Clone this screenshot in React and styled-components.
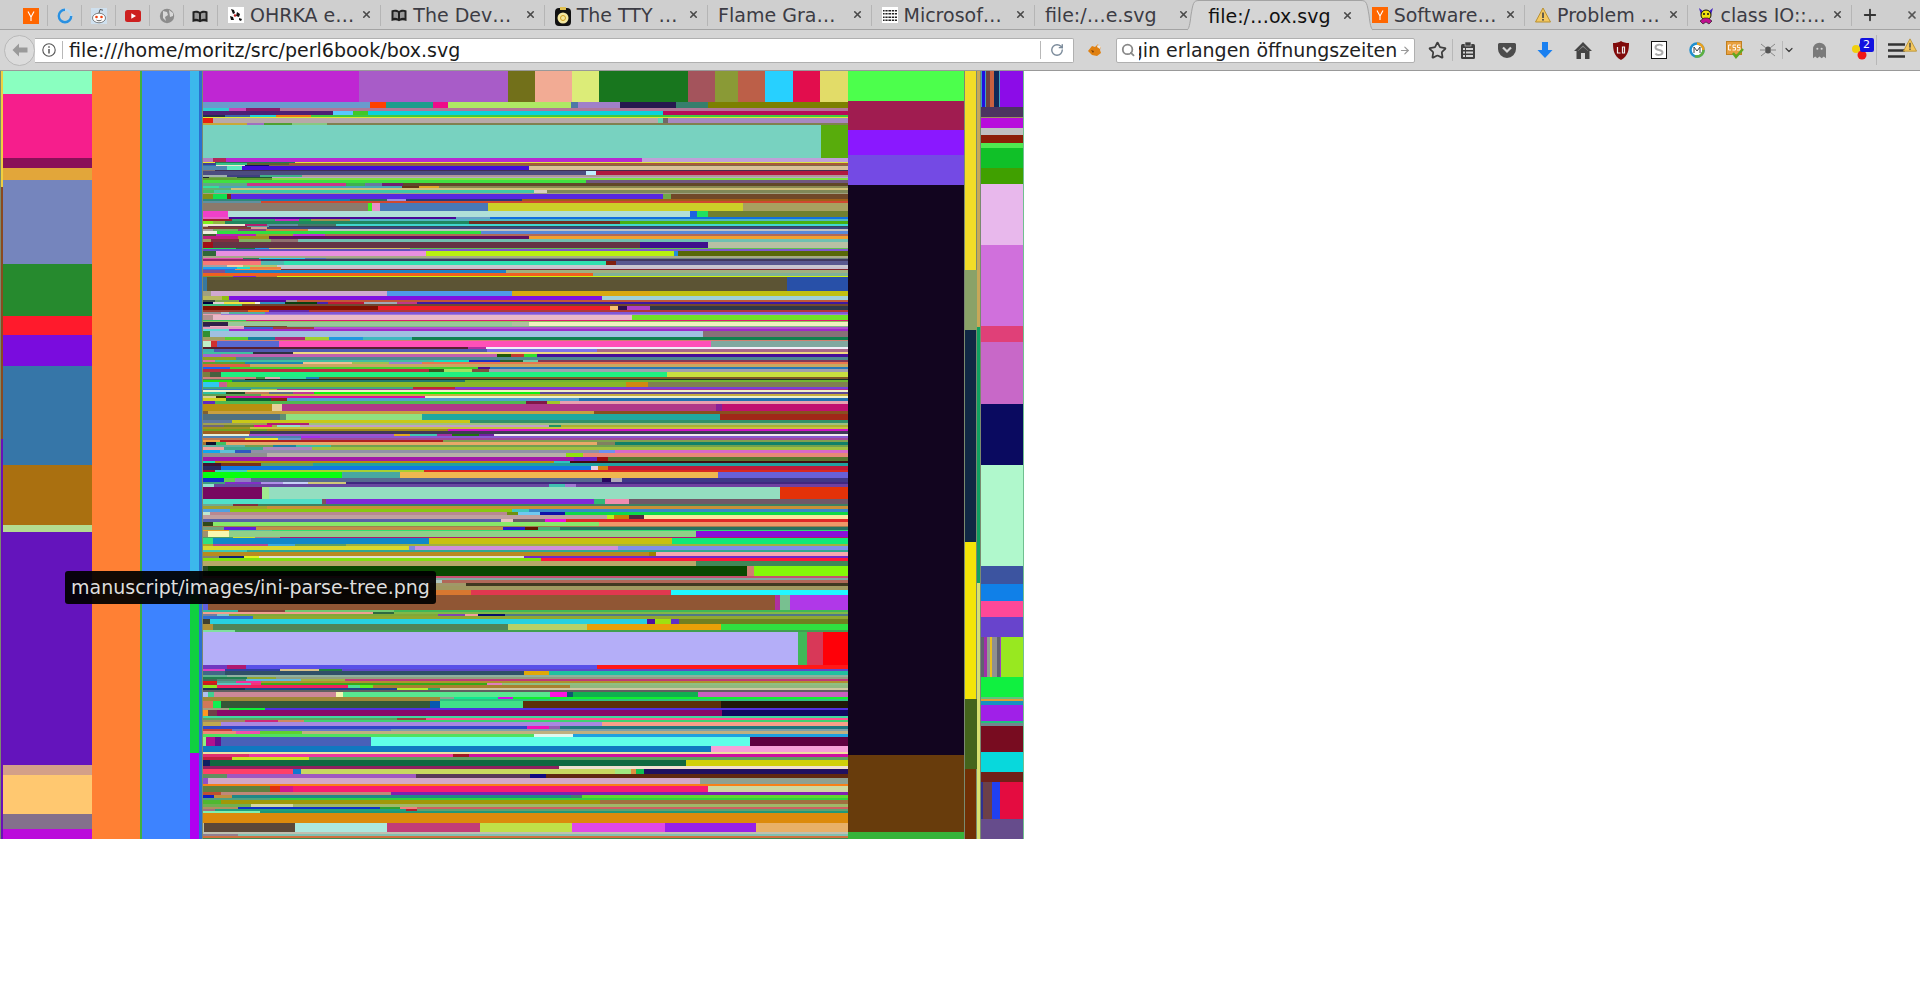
import React from 'react'
import styled, { createGlobalStyle } from 'styled-components'
import { X, Plus, RotateCw, Search, ArrowRight, ChevronDown, Star } from 'lucide-react'

const GlobalStyle = createGlobalStyle`
  html, body {
    margin: 0;
    padding: 0;
    background: #fff;
    font-family: 'DejaVu Sans', sans-serif;
  }
`

const Page = styled.div`
  position: relative;
  width: 1920px;
  height: 1006px;
  overflow: hidden;
  background: #fff;
`

const TabBar = styled.div`
  display: flex;
  align-items: stretch;
  height: 29px;
  padding-left: 14.6px;
  background: #cfcfcf;
  border-bottom: 1px solid #a3a3a3;
`

const PinnedTab = styled.div`
  display: flex;
  align-items: center;
  justify-content: center;
  box-sizing: border-box;
  width: 33.9px;
  margin: 5px 0 3px;
  border-right: 1px solid #b5b5b5;
`

const Tab = styled.div`
  position: relative;
  flex: none;
  display: flex;
  align-items: center;
  box-sizing: border-box;
  width: 163.4px;
  padding: 0 9px 0 10px;
  font-size: 19px;
  color: ${({ $active }) => ($active ? '#111' : '#3c3c44')};
  white-space: nowrap;
  z-index: ${({ $active }) => ($active ? 1 : 0)};
  height: ${({ $active }) => ($active ? '30px' : 'auto')};
  background: ${({ $active }) => ($active ? '#d5d5d5' : 'transparent')};
  border-top: ${({ $active }) => ($active ? '1px solid #a3a3a3' : 'none')};
  &::after {
    content: '';
    display: ${({ $noSep }) => ($noSep ? 'none' : 'block')};
    position: absolute;
    right: 0;
    top: 5px;
    bottom: 3px;
    width: 1px;
    background: #b5b5b5;
  }
`

const TabFlank = styled.svg`
  position: absolute;
  top: -1px;
  ${({ $side }) => ($side === 'left' ? 'left: -11px;' : 'right: -11px;')}
  ${({ $side }) => ($side === 'right' ? 'transform: scaleX(-1);' : '')}
`

const Favicon = styled.span`
  flex: none;
  display: inline-flex;
  width: 16px;
  height: 16px;
  margin-right: 6px;
`

const Close = styled.span`
  display: inline-flex;
  margin-left: auto;
  color: #4a4a4a;
`

const NewTab = styled.div`
  display: flex;
  align-items: center;
  justify-content: center;
  width: 36px;
  color: #333;
`

const WindowClose = styled.div`
  display: flex;
  align-items: center;
  margin-left: auto;
  padding-right: 2px;
  color: #555;
`

const Toolbar = styled.div`
  display: flex;
  align-items: center;
  height: 40px;
  padding-left: 4px;
  background: #d5d5d5;
  border-bottom: 1px solid #999;
`

const BackButton = styled.div`
  position: relative;
  z-index: 1;
  flex: none;
  display: flex;
  align-items: center;
  justify-content: center;
  box-sizing: border-box;
  width: 31px;
  height: 31px;
  border: 1px solid #b9b9b9;
  border-radius: 50%;
  background: #dcdcdc;
`

const UrlBar = styled.div`
  flex: none;
  display: flex;
  align-items: center;
  box-sizing: border-box;
  width: 1038.5px;
  height: 25px;
  padding-left: 7px;
  background: #fff;
  border: 1px solid #b0b0b0;
  border-left: none;
  border-radius: 0 2px 2px 0;
  font-size: 19px;
  color: #1a1a1a;
`

const UrlDivider = styled.span`
  flex: none;
  width: 1px;
  height: 18px;
  margin: ${({ $margin }) => $margin};
  background: #b8b8b8;
`

const FoxSlot = styled.div`
  flex: none;
  display: flex;
  align-items: center;
  justify-content: center;
  width: 42.5px;
`

const SearchBar = styled.div`
  flex: none;
  display: flex;
  align-items: center;
  box-sizing: border-box;
  width: 299px;
  height: 25px;
  padding: 0 3px 0 4px;
  background: #fff;
  border: 1px solid #b0b0b0;
  border-radius: 2px;
  font-size: 19px;
  color: #222;
`

const SearchText = styled.span`
  display: block;
  flex: none;
  width: 258px;
  margin: 0 2px 0 4px;
  overflow: hidden;
  direction: rtl;
  white-space: nowrap;
`

const ToolSlot = styled.div`
  flex: none;
  display: flex;
  align-items: center;
  justify-content: center;
  position: relative;
  box-sizing: border-box;
  width: ${({ $w }) => $w}px;
  padding: ${({ $pad }) => $pad || 0};
  color: #3d3d3d;
`

const ToolDivider = styled.span`
  flex: none;
  width: 1px;
  height: ${({ $h }) => $h || 22}px;
  background: #b8b8b8;
`

const Badge = styled.span`
  position: absolute;
  top: -2px;
  right: 2px;
  width: 14px;
  height: 14px;
  background: #1212e0;
  border-radius: 2px;
  color: #fff;
  font-size: 11px;
  line-height: 14px;
  text-align: center;
`

const MenuWarning = styled.span`
  position: absolute;
  top: -6px;
  right: 0;
`

const Treemap = styled.svg`
  display: block;
  shape-rendering: crispEdges;
`

const Tooltip = styled.div`
  position: absolute;
  left: 65px;
  top: 571px;
  box-sizing: border-box;
  height: 33px;
  padding: 0 6px;
  line-height: 32px;
  font-size: 19px;
  color: #dedede;
  white-space: nowrap;
  background: rgba(0, 0, 0, 0.93);
  border-radius: 3px;
`

// big blocks, x y w h colour, in page pixels minus the toolbar
const blocks = [
  [1, 0, 2, 116, '#f0d040'], [1, 116, 2, 252, '#8a4a20'], [1, 368, 2, 400, '#6a10b8'],
  [3, 0, 89, 23, '#8affc0'], [3, 23, 89, 64, '#f61e8c'], [3, 87, 89, 10, '#8a1058'],
  [3, 97, 89, 12, '#e2a63a'], [3, 109, 89, 84, '#7585bd'], [3, 193, 89, 52, '#268a2e'],
  [3, 245, 89, 19, '#ff1a2c'], [3, 264, 89, 31, '#7a0cde'], [3, 295, 89, 99, '#3676a8'],
  [3, 394, 89, 60, '#aa7010'], [3, 454, 89, 7, '#b4dc90'], [3, 461, 89, 233, '#6414bc'],
  [3, 694, 89, 10, '#d4a088'], [3, 704, 89, 39, '#ffc870'], [3, 743, 89, 15, '#84708c'],
  [3, 758, 89, 10, '#bb0bdb'],
  [92, 0, 48, 768, '#ff8034'], [140, 0, 2, 768, '#40b040'], [142, 0, 48, 768, '#3d83ff'],
  [190, 0, 9, 524, '#3cb8ec'], [190, 524, 9, 158, '#10d040'], [190, 682, 9, 86, '#b000f0'],
  [199, 0, 3, 768, '#2a70d0'],
  [848, 0, 116, 30, '#4cff4c'], [848, 30, 116, 29, '#a01c50'], [848, 59, 116, 25, '#8a18ff'],
  [848, 84, 116, 30, '#744ae4'], [848, 114, 116, 570, '#12051f'], [848, 684, 116, 77, '#683c0c'],
  [848, 761, 116, 7, '#36b43a'],
  [965, 0, 11, 199, '#f2dc28'], [965, 199, 12, 60, '#8aa268'], [965, 259, 11, 212, '#102844'],
  [965, 471, 11, 157, '#f4e408'], [965, 628, 12, 70, '#44641c'], [965, 698, 11, 70, '#703005'],
  [977, 0, 3, 256, '#c8a858'], [977, 256, 3, 256, '#10a060'], [977, 512, 3, 256, '#d8e070'],
  [981, 0, 42, 36, '#40a0c0'], [982, 0, 3, 36, '#2010e0'], [986, 0, 4, 36, '#704040'],
  [990, 0, 4, 36, '#c86040'], [994, 0, 5, 36, '#102858'], [1000, 0, 23, 36, '#8c0ce8'],
  [981, 36, 42, 10, '#4c3460'], [981, 46, 42, 1, '#a09060'], [981, 47, 42, 10, '#b80cdc'],
  [981, 57, 42, 7, '#c0c0c0'], [981, 64, 42, 8, '#8c1e08'], [981, 72, 42, 5, '#50e850'],
  [981, 77, 42, 20, '#10c028'], [981, 97, 42, 16, '#40a000'], [981, 113, 42, 61, '#e8b8ec'],
  [981, 174, 42, 81, '#d070dc'], [981, 255, 42, 16, '#e04078'], [981, 271, 42, 62, '#c868c8'],
  [981, 333, 42, 61, '#0a0a60'], [981, 394, 42, 101, '#b0f8cc'], [981, 495, 42, 18, '#3c54a0'],
  [981, 513, 42, 17, '#1080e8'], [981, 530, 42, 16, '#ff4898'], [981, 546, 42, 20, '#6844cc'],
  [981, 566, 3, 40, '#606070'], [984, 566, 3, 40, '#a030a8'], [987, 566, 3, 40, '#90a090'],
  [990, 566, 2, 40, '#e8c020'], [992, 566, 5, 40, '#909090'], [997, 566, 3, 40, '#606070'],
  [1000, 566, 1, 40, '#a040c0'], [1001, 566, 22, 40, '#98e820'],
  [981, 606, 42, 20, '#10f040'], [981, 626, 42, 2, '#60c080'], [981, 628, 42, 2, '#e0a030'],
  [981, 630, 42, 4, '#1890c0'], [981, 634, 42, 16, '#a020e8'], [981, 650, 42, 2, '#20c080'],
  [981, 652, 42, 3, '#708890'], [981, 655, 42, 26, '#780c20'], [981, 681, 42, 20, '#08d8dc'],
  [981, 701, 42, 10, '#702018'], [981, 711, 2, 37, '#303090'], [983, 711, 9, 37, '#6c4048'],
  [992, 711, 8, 37, '#2040f0'], [1000, 711, 23, 37, '#e40c40'], [981, 748, 42, 20, '#664c8c'],
  [1023, 0, 1, 768, '#70c090'],
]

// strips of the middle column, as measured on three crops: top, bottom, then end/colour pairs
const stripsA = [
  [3, 95, '377 bf26d3 731 a85cc8 796 72701a 883 f2ab94 948 dcec78 1159 18761e 1224 a4545c 1277 8a9a36 1343 bc5f48 1409 27d0ff 1473 e20d4d 1540 e2dc68'],
  [96, 113, '404 6a9bcc 443 ff4000 553 1e9c8c 588 ee0a8a 881 aee864 897 4f78a6 998 a080c8 1132 26184e 1206 367e6c 1540 7c8000'],
  [114, 122, '68 30d0d0 110 c848b8 190 8a1a6a 1540 b07898'],
  [123, 135, '316 4e1f74 363 58c8ff 398 40c828 1101 0ad2dc 1540 b80a58'],
  [136, 139, '60 203050 118 3868a8 180 20d0d8 263 f07820 1540 40c840'],
  [140, 144, '1540 d8ec30'],
  [145, 158, '31 e82010 1087 b8a8a8 1100 60d8b0 1111 706868 1540 a888c0'],
  [159, 164, '112 c8a838 153 a070c0 219 50a030 302 88c880 1540 808050'],
  [165, 262, '1476 78d2c0 1540 58ac0c'],
  [263, 275, '32 b080c0 61 b02858 1051 b828d0 1540 c0a0d8'],
  [276, 279, '36 e8e830 226 208050 1540 d8e840'],
  [280, 284, '38 404090 112 38c088 212 606030 1540 a85838'],
  [285, 287, '38 3070b0 106 f0e8d0 165 101060 1540 806848'],
  [288, 298, '64 5088b0 100 60e8c0 782 4010d8 1540 d8c098'],
  [299, 303, '36 807070 1540 403050'],
  [304, 315, '918 4c4c80 940 c0f0ff 1540 b01840'],
  [316, 319, '64 a0b0b0 142 404080 242 40b088 1540 b09898'],
  [320, 323, '22 202030 88 70a050 172 205838 1540 b8a8c8'],
  [324, 328, '172 60a030 1540 80e040'],
  [329, 338, '917 40e040 1540 705880'],
  [339, 346, '112 60a888 348 c83888 392 40b050 432 6878a0 482 702070 1540 604828'],
  [347, 354, '46 30e0a0 480 48a8b8 520 603818 567 e0a828 1540 888850'],
  [355, 359, '74 60b070 1540 d0c078'],
  [360, 367, '34 40c060 794 40c8a8 824 d8d0c0 1540 808858'],
  [368, 371, '1540 a0a080'],
  [372, 385, '32 809018 64 10e050 74 802020 1101 5828e0 1120 70a848 1540 704828'],
  [386, 393, '144 308878 356 1878b0 444 306860 490 9890e0 765 283878 1540 a06018'],
  [394, 398, '144 6090a0 1540 d04830'],
  [399, 422, '400 8a7a6c 408 40f020 428 e890c8 684 4878b8 1291 ccd028 1540 a8a060'],
  [423, 441, '66 f040c8 1164 b0e0d8 1181 2060e0 1207 20e060 1540 708030'],
  [442, 447, '70 e860c8 608 480898 690 68a0c8 1540 1070e0'],
  [448, 452, '76 a02028 178 30a070 236 c030c0 264 20a850 356 a09050 1540 50b8c0'],
  [453, 461, '30 80f020 60 90b840 640 208860 997 703020 1540 48b010'],
  [462, 466, '108 f0e8d0 160 b02070 232 6090a0 322 487868 1540 40d8d0'],
  [467, 471, '20 c0b0a0 112 703050 164 60a0a0 1540 384858'],
  [472, 476, '122 804030 160 d0a090 1540 384880'],
  [477, 482, '30 b0a0a0 90 70b060 156 904080 256 d08040 1540 c0c0c0'],
  [483, 490, '40 f0f0e0 667 30e040 1540 5888d8'],
  [491, 497, '38 406030 134 b820b8 220 a0a030 296 c030d0 1540 b06858'],
  [498, 507, '90 c02080 165 a09020 782 601060 1540 f0a030'],
  [508, 514, '26 a0a060 92 803040 168 80b060 232 907070 1540 70c0b0'],
  [515, 532, '31 a01018 1046 643444 1206 40108c 1540 b8c0a4'],
  [533, 536, '86 20e060 130 108040 164 20a0e0 500 d0c060 1540 60c050'],
  [537, 543, '500 6050c0 1540 8058d0'],
  [544, 558, '38 306838 536 e890e0 1126 b8f010 1136 2090d8 1540 586808'],
  [559, 563, '1540 a8a888'],
  [564, 567, '102 e050b0 140 208060 250 20d0f0 300 4878c0 1540 708880'],
  [568, 572, '144 902868 1540 403860'],
  [573, 584, '144 f87878 200 50b8b0 965 30e0b0 988 802010 1540 585890'],
  [585, 590, '64 a8a0a0 102 f0d0a0 184 b0c870 1540 c8c8d0'],
  [591, 595, '88 20a0f0 118 20e0d0 192 f08040 1540 c8c0d0'],
  [596, 600, '84 4068d0 192 f09048 1540 802830'],
  [601, 607, '60 805090 726 2080c8 1540 a0b080'],
  [608, 617, '933 f06020 1540 80b098'],
  [618, 621, '78 889030 132 8020d0 184 c07030 1540 d0f010'],
  [622, 663, '17 3878a0 1395 5c5434 1540 2850a8'],
  [664, 677, '26 a0a080 444 d0a8d0 741 5098e8 1068 d8a810 1540 c0c010'],
  [678, 688, '52 b8b860 68 90c010 955 8010e0 1540 a0d0d8'],
  [689, 695, '36 405040 92 80a050 204 580898 230 a09090 1540 c05838'],
  [696, 702, '30 000040 56 e0d0d0 130 f0e040 142 f0f0e0 202 3090c0 278 084010 303 4820b0 390 c01838 468 a0a8b8 516 c03888 1540 4018a0'],
  [703, 706, '100 40c080 1540 704830'],
  [707, 720, '422 801000 974 f01c28 994 f8c070 1015 301050 1068 b040c8 1540 303848'],
]

const stripsB = [
  [30, 35, '114 a04030 164 f07010 260 6828a8 1540 b03838'],
  [36, 41, '50 909090 70 a8c0c8 154 50b0a0 1540 8058d8'],
  [42, 45, '50 e8a0b0 1540 a078d8'],
  [46, 58, '30 b09090 1026 e8b8c8 1540 70e028'],
  [59, 62, '110 30c060 166 d01878 1540 e01870'],
  [63, 66, '1540 90c060'],
  [67, 76, '66 302048 741 98c898 782 b0c0a0 1540 f0f0c0'],
  [77, 80, '24 504880 105 f0b0c0 207 705030 1540 80b888'],
  [81, 86, '105 e0a0c0 174 3860d0 272 a04040 1540 b050d0'],
  [87, 92, '70 60d8d8 1540 a028c8'],
  [93, 110, '24 309030 1195 a0c0e0 1540 887078'],
  [111, 118, '60 a0a060 114 58d030 178 1880a0 250 b02878 306 a0d030 388 2098e0 503 40b8c0 1540 108050'],
  [119, 122, '1540 d08070'],
  [123, 140, '27 c0f0c8 40 d03030 188 5868d0 1215 ff50b8 1540 80a8a0'],
  [141, 147, '637 582030 680 b030a0 1540 f0f0f8'],
  [148, 156, '34 40b0b0 681 5058b0 943 8070e8 1540 a86888'],
  [157, 161, '126 40c0a0 220 303040 1540 f0d880'],
  [162, 170, '50 a068d0 706 c060b0 738 205808 770 c03830 800 30e030 1540 481098'],
  [171, 178, '86 90a020 1540 508890'],
  [179, 186, '36 e070a0 556 40c0a0 640 10e0c0 712 2030c0 768 286030 804 70c8a8 1540 803858'],
  [187, 192, '108 60a030 245 2088b0 362 f0c090 448 a0c050 528 a080c8 1540 e87850'],
  [193, 200, '118 e06040 1540 c8a860'],
  [201, 207, '72 2060f0 660 40d030 688 481090 1540 2878b8'],
  [208, 215, '544 b83040 580 385820 646 a0e060 686 805040 1540 a0a0b0'],
  [216, 231, '24 788040 50 486040 1109 20f080 1540 c8e040'],
  [232, 235, '134 d08080 154 409040 190 e0a8b0 252 30d8a0 282 2080c0 1540 805828'],
  [236, 240, '108 508060 122 302010 1540 183828'],
  [241, 246, '76 20e010 630 207870 1540 70b830'],
  [247, 260, '44 30c8f0 64 c86090 1011 88b828 1064 d08810 1540 808050'],
  [261, 265, '506 40a880 606 c02830 1540 7840d8'],
  [266, 270, '122 3878c0 184 b0c040 1540 b03090'],
  [271, 274, '1540 f0f0c8'],
  [275, 282, '62 30c0a0 108 204828 164 c07860 220 606888 272 c03898 808 10f010 1540 604898'],
  [283, 287, '144 60a050 1540 c8b040'],
  [288, 292, '38 d8d090 62 403010 535 d810a0 1540 f0f0c8'],
  [293, 302, '62 d0d020 168 106030 206 802810 900 50a0d0 1540 2070b0'],
  [303, 311, '36 6028c0 775 50b850 824 801848 856 a0c828 1540 e8a0b0'],
  [312, 331, '170 b89010 195 e8d098 1226 b03888 1240 882098 1540 c01070'],
  [332, 341, '20 806030 936 c8a040 1540 885020'],
  [342, 360, '190 507080 204 609070 528 90e080 1236 20a8a0 1540 a02818'],
  [361, 368, '76 6078a0 641 c8c818 1540 309068'],
  [369, 373, '160 a0a050 260 b02070 1540 a0c080'],
  [374, 380, '58 706878 128 708030 170 f00890 184 a0a850 238 90e0d0 830 c0a0c8 858 209060 1540 a8b030'],
  [381, 386, '118 a09020 1540 c8c040'],
  [387, 393, '160 70a020 588 a08818 1540 d010c8'],
  [394, 400, '118 a06020 1540 403858'],
  [401, 407, '116 e8f0d8 460 a050d0 498 e0a820 562 40c8b0 598 a030a0 664 207010 698 7020a0 1540 f0e8f0'],
  [408, 413, '240 5080b0 286 a030f0 1540 8858d0'],
  [414, 418, '106 c07850 185 f0e830 240 6898c8 1540 a04898'],
  [419, 424, '48 f0a040 577 b02020 1540 80a050'],
  [425, 435, '14 a07030 38 101030 62 40c060 943 e8a868 985 808060 1540 108068'],
  [436, 441, '106 60b0a0 174 70a050 228 2080a0 312 40c0a0 1540 70a050'],
  [442, 448, '58 f0a0a0 150 40a890 266 a888c0 1540 a0c040'],
  [449, 459, '48 10a8f0 82 60c0d8 120 3058c0 947 9090a8 987 7090f0 1540 d868c8'],
  [460, 470, '160 909090 870 b8b0a8 910 90e010 1540 e88878'],
  [471, 481, '888 a018a8 944 7020c0 970 a01010 1540 587830'],
  [482, 489, '36 10e0b0 842 b09010 878 30c0c0 1540 400c10'],
  [490, 497, '50 401030 146 783018 268 60a060 1540 20a0a0'],
  [498, 510, '50 282860 928 1078e0 946 e8d0e8 970 d08010 1540 c01838'],
  [511, 515, '36 a01030 112 40d0c0 532 a8d030 1540 d82820'],
  [516, 534, '338 08ff10 474 48a8a0 1230 f0b850 1540 6860d8'],
  [535, 546, '57 1030c8 82 60d050 122 9080c0 954 586890 976 280860 1002 b0a8b8 1540 403888'],
  [547, 551, '60 40a080 144 8030c8 198 b090e8 256 c8d0f8 348 d0c878 1540 402880'],
  [552, 560, '34 90e0d0 830 6848a0 866 40c0b0 893 a078d0 1540 7040a0'],
  [561, 597, '147 780860 163 a0e890 1377 94dec0 1540 e43208'],
  [598, 610, '291 50e0c8 299 805060 936 8028d8 962 30b878 1019 f08cb0 1540 705868'],
  [611, 616, '78 70a890 138 803040 1540 408060'],
  [617, 626, '160 a0a030 1540 c89038'],
  [627, 634, '72 50a0e0 742 88c810 782 40c8c0 1540 3888c8'],
  [635, 643, '24 c0e8d0 729 b88890 755 709010 808 70c8f0 868 1010a8 1540 10d848'],
  [644, 656, '967 c0a0a0 984 b8f020 1020 c88008 1056 502840 1540 f8e8a0'],
  [657, 665, '716 5860a8 744 e8c0c0 820 685868 870 f010e0 1540 e02828'],
  [666, 676, '30 304818 948 88e868 1540 f09868'],
  [677, 681, '1540 a08050'],
  [682, 688, '58 70a080 132 6020d8 720 c09048 772 2818c8 803 601800 855 50a878 1540 287060'],
  [689, 693, '70 e8a020 170 60c0a0 1540 30e070'],
  [694, 709, '20 a09070 70 f8f8b0 1178 90d088 1540 8a10d8'],
  [710, 713, '78 50a060 130 d0e030 190 b08080 1540 b01870'],
]

const stripsC = [
  [24, 40, '30 30e080 544 1088c8 1122 c8c010 1540 10e878'],
  [41, 47, '30 b0a030 162 b04898 226 40a8d8 348 60a060 1540 a0b040'],
  [48, 58, '497 d8d830 510 8088e0 994 d090d8 1540 8090e8'],
  [59, 64, '112 40c8b0 1540 30a890'],
  [65, 76, '1066 b88a20 1083 a08000 1540 f8a8b0'],
  [77, 84, '46 808070 105 102070 141 e0f020 770 e0e0d0 1540 7028c8'],
  [85, 93, '810 80e010 1540 ff1838'],
  [94, 108, '1178 b8a868 1540 408858'],
  [109, 136, '20 284828 1300 0a4800 1316 d08070 1540 84f808'],
  [137, 144, '1540 c85070'],
  [145, 150, '1540 80a8a0'],
  [151, 158, '576 b0c8c0 1540 b06858'],
  [159, 168, '632 a09868 1540 403820'],
  [169, 180, '1540 a09860'],
  [181, 195, '556 705030 644 d87830 1120 e03850 1540 20f8ff'],
  [196, 239, '20 6060e0 1367 905634 1378 b030a0 1402 78c090 1540 b038e8'],
  [240, 244, '90 30b8a0 203 804838 462 70c870 1540 40b858'],
  [245, 250, '412 f0a090 462 306840 1540 80b848'],
  [251, 258, '40 7080a0 68 80c8c0 566 80a838 630 8048b0 660 f0a0a0 725 081068 1540 507888'],
  [259, 265, '126 3070d0 1540 90a830'],
  [266, 281, '24 404030 1062 28d0e0 1082 5010a0 1120 a0e010 1137 6030c8 1540 708020'],
  [282, 300, '32 b09038 732 508458 920 b8d068 1238 e8a008 1540 30e040'],
  [301, 305, '84 80e0a0 1540 40a050'],
  [306, 405, '1421 b4aef8 1442 40b858 1480 d83858 1540 ff0008'],
  [406, 416, '64 7038c0 110 b01870 943 5850e8 1540 ff1818'],
  [417, 422, '60 e040c0 190 3040a0 283 d8c088 338 208040 1540 6048c8'],
  [423, 435, '60 406888 770 305068 830 e0a808 1540 20c0a0'],
  [436, 441, '64 60b090 1540 90b0a0'],
  [442, 447, '112 208050 180 90a830 1540 90a080'],
  [448, 452, '40 406858 110 508878 240 60b8e0 344 a0b040 1540 c03878'],
  [453, 457, '40 e01818 86 50a090 146 f030a0 1540 b09030'],
  [458, 465, '40 c02020 120 60c0c0 146 f03878 682 38a818 718 e080c0 1540 90c080'],
  [466, 473, '40 90e820 352 f02060 380 50e090 412 60f020 880 a88030 1540 90b880'],
  [474, 480, '108 203058 468 204888 542 b0f030 570 20b060 1540 d0c8a0'],
  [481, 484, '1540 606060'],
  [485, 501, '18 b0c0f0 33 40d090 323 cc8898 340 f0f8b0 832 58e890 872 ff10e0 886 105870 1182 10b050 1540 c860c0'],
  [502, 507, '570 a08838 604 90a090 708 10e890 744 d010e0 1540 10f030'],
  [508, 513, '570 a08838 1540 30c080'],
  [514, 533, '30 d07858 50 10f050 546 345838 570 0858b0 767 40e088 1238 5c3008 1540 201808'],
  [534, 538, '70 a0a080 154 10f038 1540 5030e0'],
  [539, 557, '20 ff9820 40 704048 1240 880868 1540 100860'],
  [558, 562, '1540 40d8a0'],
  [563, 568, '468 60a060 538 a04040 1540 ff5090'],
  [569, 575, '108 a08860 185 d02878 246 d08860 1540 40d070'],
  [576, 586, '50 c0a850 955 a888e0 1540 f8a088'],
  [587, 597, '776 3048c8 828 f010b8 856 9060b0 1540 207880'],
  [598, 603, '76 c04040 454 6878c8 1540 80a0a8'],
  [604, 611, '86 f08878 142 f050b0 242 60d030 1540 c0b080'],
  [612, 620, '794 50e060 886 e0f8f0 1540 20a0e0'],
  [621, 646, '15 90f080 36 b01090 50 601090 407 4860b8 1307 60ffe8 1540 600040'],
  [647, 666, '1214 1078c0 1540 f8a0d8'],
  [667, 670, '1540 f0e0a0'],
  [671, 680, '116 e03070 602 f038a0 640 a01828 1540 d010a0'],
  [681, 688, '76 c02040 260 c8e020 1540 60a060'],
  [689, 706, '24 102060 1154 106840 1540 d0d008'],
  [707, 716, '853 902060 1540 f0e0d0'],
  [717, 732, '220 ff4068 241 1078d0 986 c8d860 1024 a0e880 1036 e09040 1056 10c050 1540 201060'],
  [733, 742, '64 609060 513 a058c0 784 583858 821 100880 1540 602810'],
  [743, 762, '20 9050c8 1187 d4a8c8 1540 90a090'],
  [763, 767, '1540 f88018'],
  [768, 786, '166 608040 191 e03010 222 d01890 1206 f81c70 1540 d0d8a0'],
  [787, 793, '50 c05030 454 c08878 1540 8020b0'],
  [794, 804, '34 1020c0 76 c09040 882 208888 908 408070 1540 60d830'],
  [805, 809, '166 50a080 1540 30d040'],
  [810, 822, '50 50b830 950 a09808 1540 a07040'],
  [823, 830, '120 70b050 220 d0d8a0 1540 a0b868'],
  [831, 837, '90 b09060 428 1030c8 476 30a030 516 f08080 1540 d06060'],
  [838, 843, '36 a07080 490 20a080 516 b02030 1540 60a070'],
  [844, 849, '143 80f0b0 1540 209878'],
  [850, 879, '1540 dc8a0c'],
  [880, 906, '10 c0c0a0 226 5c4838 444 ace8de 665 c23c78 884 c0e048 1105 e048e8 1322 9820e8 1540 e8b068'],
  [907, 911, '1540 c0c0b0'],
  [912, 918, '90 908090 1540 80c0b0'],
  [919, 922, '1540 d07040'],
  [923, 927, '1540 408850'],
]

const Strips = ({ rows, top }) => (
  <g transform={`translate(200 ${top}) scale(${660 / 1568} ${1 / 3})`}>
    {rows.map(([y0, y1, cells]) => {
      const parts = cells.split(' ')
      let from = 6
      const out = []
      for (let i = 0; i < parts.length; i += 2) {
        const end = Number(parts[i])
        out.push(<rect key={i} x={from} y={y0} width={end - from} height={y1 - y0 + 1} fill={`#${parts[i + 1]}`} />)
        from = end
      }
      return <g key={y0}>{out}</g>
    })}
  </g>
)

const BoxChart = () => (
  <Treemap width="1024" height="768" viewBox="0 0 1024 768">
    <rect x="0" y="0" width="1024" height="768" fill="#7a8a70" />
    {blocks.map(([x, y, w, h, fill]) => (
      <rect key={`${x}-${y}`} x={x} y={y} width={w} height={h} fill={fill} />
    ))}
    <Strips rows={stripsA} top={-1} />
    <Strips rows={stripsB} top={229} />
    <Strips rows={stripsC} top={459} />
  </Treemap>
)

const YIcon = () => (
  <svg width="16" height="16" viewBox="0 0 16 16">
    <rect width="16" height="16" fill="#ff6600" />
    <path d="M5 3.5 8 9l3-5.5M8 9v4" fill="none" stroke="#fff" strokeWidth="1.1" />
  </svg>
)

const RingIcon = () => (
  <svg width="16" height="16" viewBox="0 0 16 16">
    <circle cx="8" cy="8" r="6.2" fill="none" stroke="#b8d8f0" strokeWidth="2.4" />
    <path d="M8 1.8a6.2 6.2 0 1 0 6.2 6.2" fill="none" stroke="#2a90e0" strokeWidth="2.4" />
  </svg>
)

const RedditIcon = () => (
  <svg width="16" height="16" viewBox="0 0 16 16">
    <rect width="16" height="16" fill="#cfe0ee" />
    <ellipse cx="8" cy="10" rx="6.5" ry="4.8" fill="#fff" stroke="#333" strokeWidth="0.6" />
    <circle cx="5.5" cy="9" r="1.3" fill="#f04010" />
    <circle cx="10.5" cy="9" r="1.3" fill="#f04010" />
    <path d="M8 5l1-3.5 3 .7" fill="none" stroke="#333" strokeWidth="0.8" />
    <path d="M5.5 12c1.5 1 3.5 1 5 0" fill="none" stroke="#333" strokeWidth="0.8" />
  </svg>
)

const YoutubeIcon = () => (
  <svg width="16" height="16" viewBox="0 0 16 16">
    <rect y="2" width="16" height="12" rx="2.5" fill="#cd201f" />
    <path d="M6.3 5.2v5.6L11 8z" fill="#fff" />
  </svg>
)

const GlobeIcon = () => (
  <svg width="16" height="16" viewBox="0 0 16 16">
    <circle cx="8" cy="8" r="7.2" fill="#8c8c8c" />
    <path d="M4 3l4 1 1 3-3 2 1 4-3-3zM10 2l4 3 0 3-3 1z" fill="#d8d8d8" />
  </svg>
)

const BookIcon = () => (
  <svg width="16" height="16" viewBox="0 0 16 16">
    <path d="M0.5 3.5C3 2.5 6 2.5 8 4c2-1.5 5-1.5 7.5-.5V14c-2.5-1-5.5-1-7.5.3C6 13 3 13 .5 14z" fill="#222" />
    <path d="M2.5 5c1.5-.5 3-.3 4.5.5v6c-1.500-.7-3-.8-4.5-.5zM13.5 5c-1.5-.5-3-.3-4.5.5v6c1.5-.7 3-.8 4.5-.5z" fill="#9a9a9a" />
  </svg>
)

const PandaIcon = () => (
  <svg width="16" height="16" viewBox="0 0 16 16">
    <rect width="16" height="16" fill="#fff" />
    <path d="M3 2l3 1 1 3-2 1zM9 5l3 2-1 3-3-1zM2 9l3 1 1 3-3 0zM11 11l3 1-1 2-2-1z" fill="#111" />
    <circle cx="7" cy="8.5" r="1.2" fill="#c02020" />
  </svg>
)

const LampIcon = () => (
  <svg width="16" height="19" viewBox="0 0 16 19">
    <rect y="1" width="16" height="18" rx="4" fill="#111" />
    <rect x="5" y="0" width="6" height="3" fill="#e0c050" />
    <circle cx="8" cy="11" r="5.5" fill="#f4e8a0" />
    <circle cx="8" cy="11" r="2.5" fill="none" stroke="#d0a020" strokeWidth="1" />
  </svg>
)

const MetaIcon = () => (
  <svg width="16" height="16" viewBox="0 0 16 16">
    <rect width="16" height="16" fill="#fff" />
    <path d="M1 3h14v1.500H1zM1 6h14v1.500H1zM1 9.500h14V11H1zM1 12.500h14V14H1z" fill="#222" />
    <path d="M3 2v13M6 2v13M9.500 2v13M12.500 2v13" stroke="#fff" strokeWidth="0.8" />
  </svg>
)

const WarningIcon = ({ size = 16 }) => (
  <svg width={size} height={size} viewBox="0 0 16 16">
    <path d="M8 1 15.500 15H.5z" fill="#f4c860" stroke="#b89030" strokeWidth="1" />
    <rect x="7.200" y="5.500" width="1.600" height="5.500" fill="#444" />
    <rect x="7.200" y="12" width="1.600" height="1.600" fill="#444" />
  </svg>
)

const BeeIcon = () => (
  <svg width="16" height="18" viewBox="0 0 16 18">
    <path d="M1 1l5 4-3 3zM15 1l-5 4 3 3z" fill="#4020c0" />
    <circle cx="8" cy="8" r="5" fill="#f0e010" stroke="#111" />
    <circle cx="6" cy="7" r="1" fill="#111" />
    <circle cx="10" cy="7" r="1" fill="#111" />
    <path d="M2 14l4-3h4l4 3-3 3-3-2-3 2z" fill="#c01090" stroke="#111" strokeWidth="0.6" />
  </svg>
)

const FoxIcon = () => (
  <svg width="16" height="16" viewBox="0 0 16 16">
    <path d="M1 9l4-5 3 1 3-3 1 2 2 0-1 4 1 3-4 3-5-1z" fill="#e08010" />
    <path d="M11 2l1 2 2 0-1 3-3-2z" fill="#e8e8e8" />
    <path d="M4 8l3 1-1 2z" fill="#7a4008" />
  </svg>
)

const ClipboardIcon = () => (
  <svg width="16" height="18" viewBox="0 0 16 18">
    <rect x="1" y="3" width="14" height="15" rx="1.5" fill="#3f3f3f" />
    <rect x="5" y="1" width="6" height="4" fill="#3f3f3f" stroke="#d5d5d5" strokeWidth="0.6" />
    <path d="M3 7h2v2H3zM6 7h7v2H6zM3 10.500h2v2H3zM6 10.500h7v2H6zM3 14h2v2H3zM6 14h7v2H6z" fill="#d5d5d5" />
  </svg>
)

const PocketIcon = () => (
  <svg width="18" height="16" viewBox="0 0 18 16">
    <path d="M1.5 1h15A1.5 1.5 0 0 1 18 2.500V7a9 9 0 0 1-18 0V2.500A1.5 1.5 0 0 1 1.5 1z" fill="#4c4c4c" />
    <path d="M5 5.500 9 9.500l4-4" fill="none" stroke="#d5d5d5" strokeWidth="2.2" />
  </svg>
)

const DownloadIcon = () => (
  <svg width="16" height="18" viewBox="0 0 16 18">
    <path d="M5 1h6v8h4.500L8 17 .5 9H5z" fill="#1a80f0" />
  </svg>
)

const HomeIcon = () => (
  <svg width="18" height="17" viewBox="0 0 18 17">
    <path d="M9 0 18 9h-2.500v8h-4.500v-6H7v6H2.500V9H0z" fill="#444" />
    <path d="M9 3.500 3.500 9h1V8.500L9 5l4.500 3.500V9h1z" fill="#888" />
  </svg>
)

const UblockIcon = () => (
  <svg width="16" height="19" viewBox="0 0 16 19">
    <path d="M8 0c2 1.500 5 2 8 2 0 7-1 13-8 17C1 15 0 9 0 2c3 0 6-.5 8-2z" fill="#800a0a" />
    <path d="M4.500 6v6h3M9.500 6h2v6h-2z" fill="none" stroke="#eee" strokeWidth="1.2" />
  </svg>
)

const StylishIcon = () => (
  <svg width="16" height="18" viewBox="0 0 16 18">
    <rect x="0.5" y="0.5" width="15" height="17" fill="#fff" stroke="#111" />
    <path d="M11.500 5c-1-2-7-2-7 1.500 0 3.500 7 1.500 7 5 0 3-6 3-7 1" fill="none" stroke="#aaa" strokeWidth="2" />
  </svg>
)

const MeterIcon = () => (
  <svg width="16" height="18" viewBox="0 0 16 18">
    <circle cx="8" cy="9" r="6.5" fill="#fff" stroke="#2090d0" strokeWidth="2.5" />
    <path d="M8 2.500a6.500 6.500 0 0 1 6.500 6.500" fill="none" stroke="#e8a020" strokeWidth="2.5" />
    <path d="M14.500 9A6.500 6.500 0 0 1 6 15.200" fill="none" stroke="#60b040" strokeWidth="2.5" />
    <path d="M5 12V6l3 4 3-4v6" fill="none" stroke="#444" strokeWidth="1" />
  </svg>
)

const CssIcon = () => (
  <svg width="18" height="18" viewBox="0 0 18 18">
    <rect x="0.5" y="0.5" width="15" height="13" fill="#e8a040" stroke="#c08020" />
    <path d="M5 4H2.500v5H5M10 4H7v2.500h2.500V9H6.500M14.500 4h-3v2.500H14V9h-3" fill="none" stroke="#fff" strokeWidth="0.9" />
    <path d="M7 12l3 4 7-8" fill="none" stroke="#60a820" strokeWidth="2.4" />
  </svg>
)

const SpiderIcon = () => (
  <svg width="18" height="16" viewBox="0 0 18 16">
    <ellipse cx="9" cy="8" rx="3" ry="3.5" fill="#555" />
    <path d="M7 6 2 2M7 8 1 8M7 10l-5 4M11 6l5-4M11 8h6M11 10l5 4" stroke="#888" strokeWidth="1" fill="none" />
  </svg>
)

const GhostIcon = () => (
  <svg width="13" height="17" viewBox="0 0 15 18">
    <path d="M0 18V7.500a7.500 7.500 0 0 1 15 0V18l-2.500-2-2.500 2-2.500-2L5 18l-2.500-2z" fill="#7a7a7a" />
    <circle cx="5" cy="7" r="1.2" fill="#d5d5d5" />
    <circle cx="10" cy="7" r="1.2" fill="#d5d5d5" />
  </svg>
)

const DotsIcon = () => (
  <svg width="20" height="20" viewBox="0 0 20 20">
    <circle cx="13" cy="6" r="4" fill="#2030e0" />
    <circle cx="6" cy="9" r="4" fill="#f0d010" />
    <circle cx="12" cy="15" r="4.5" fill="#f01818" />
  </svg>
)

const Hamburger = () => (
  <svg width="17" height="15" viewBox="0 0 17 15">
    <path d="M0 1.500h17M0 7.500h17M0 13.500h17" stroke="#333" strokeWidth="2.5" />
  </svg>
)

const tabs = [
  { icon: <PandaIcon />, label: 'OHRKA e…' },
  { icon: <BookIcon />, label: 'The Dev…' },
  { icon: <LampIcon />, label: 'The TTY …' },
  { label: 'Flame Gra…' },
  { icon: <MetaIcon />, label: 'Microsof…' },
  { label: 'file:/…e.svg', noSep: true },
  { label: 'file:/…ox.svg', active: true, noSep: true },
  { icon: <YIcon />, label: 'Software…' },
  { icon: <WarningIcon />, label: 'Problem …' },
  { icon: <BeeIcon />, label: 'class IO::…' },
]

const pinned = [<YIcon />, <RingIcon />, <RedditIcon />, <YoutubeIcon />, <GlobeIcon />, <BookIcon />]

const Flank = ({ side }) => (
  <TabFlank $side={side} width="12" height="31" viewBox="0 0 12 31">
    <path d="M12 0.5C6 0.5 6 4 4 15 3 24 2 29 0 30V31h12z" fill="#d5d5d5" />
    <path d="M12 0.5C6 0.5 6 4 4 15 3 24 2 29 0 30" fill="none" stroke="#a3a3a3" />
  </TabFlank>
)

export default function App() {
  return (
    <Page>
      <GlobalStyle />
      <TabBar>
        {pinned.map((icon, i) => (
          <PinnedTab key={i}>{icon}</PinnedTab>
        ))}
        {tabs.map(tab => (
          <Tab key={tab.label} $active={tab.active} $noSep={tab.noSep}>
            {tab.active && <Flank side="left" />}
            {tab.icon && <Favicon>{tab.icon}</Favicon>}
            {tab.label}
            <Close>
              <X size={11} strokeWidth={3.5} />
            </Close>
            {tab.active && <Flank side="right" />}
          </Tab>
        ))}
        <NewTab>
          <Plus size={18} strokeWidth={2.4} />
        </NewTab>
        <WindowClose>
          <X size={12} strokeWidth={3.5} />
        </WindowClose>
      </TabBar>

      <Toolbar>
        <BackButton>
          <svg width="16" height="14" viewBox="0 0 16 14">
            <path d="M7 0.5 0.5 7 7 13.500V9.500h8.500v-5H7z" fill="#9a9a9a" />
          </svg>
        </BackButton>
        <UrlBar>
          <svg width="14" height="14" viewBox="0 0 14 14">
            <circle cx="7" cy="7" r="6.2" fill="none" stroke="#555" strokeWidth="1.1" />
            <path d="M7 6v4.500M7 3.200v1.600" stroke="#555" strokeWidth="1.5" />
          </svg>
          <UrlDivider $margin="0 6px 0 6px" />
          file:///home/moritz/src/perl6book/box.svg
          <UrlDivider $margin="0 0 0 auto" />
          <ToolSlot $w={32}>
            <RotateCw size={14} strokeWidth={2.4} color="#7a8a9a" />
          </ToolSlot>
        </UrlBar>
        <FoxSlot>
          <FoxIcon />
        </FoxSlot>
        <SearchBar>
          <Search size={16} strokeWidth={3} color="#888" />
          <SearchText>gin erlangen öffnungszeiten&lrm;</SearchText>
          <ArrowRight size={13} strokeWidth={2.4} color="#999" />
        </SearchBar>
        <ToolSlot $w={37} $pad="0 0 0 7px">
          <Star size={19} strokeWidth={2.2} />
        </ToolSlot>
        <ToolDivider />
        <ToolSlot $w={34.5} $pad="0 4px 0 0">
          <ClipboardIcon />
        </ToolSlot>
        <ToolSlot $w={38}>
          <PocketIcon />
        </ToolSlot>
        <ToolSlot $w={38}>
          <DownloadIcon />
        </ToolSlot>
        <ToolSlot $w={38}>
          <HomeIcon />
        </ToolSlot>
        <ToolSlot $w={38}>
          <UblockIcon />
        </ToolSlot>
        <ToolSlot $w={38}>
          <StylishIcon />
        </ToolSlot>
        <ToolSlot $w={38}>
          <MeterIcon />
        </ToolSlot>
        <ToolSlot $w={38}>
          <CssIcon />
        </ToolSlot>
        <ToolSlot $w={28}>
          <SpiderIcon />
        </ToolSlot>
        <ToolDivider $h={18} />
        <ToolSlot $w={12}>
          <ChevronDown size={12} strokeWidth={2.4} />
        </ToolSlot>
        <ToolSlot $w={49}>
          <GhostIcon />
        </ToolSlot>
        <ToolSlot $w={32}>
          <DotsIcon />
          <Badge>2</Badge>
        </ToolSlot>
        <ToolDivider $h={30} />
        <ToolSlot $w={40}>
          <Hamburger />
          <MenuWarning>
            <WarningIcon size={14} />
          </MenuWarning>
        </ToolSlot>
      </Toolbar>

      <BoxChart />
      <Tooltip>manuscript/images/ini-parse-tree.png</Tooltip>
    </Page>
  )
}
